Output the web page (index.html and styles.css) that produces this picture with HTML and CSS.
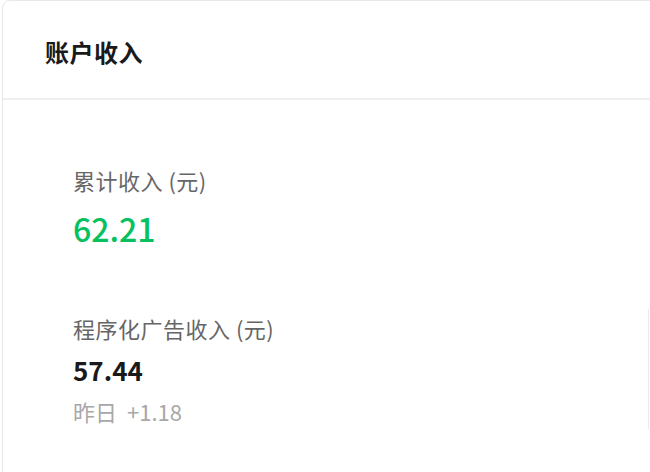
FILE: index.html
```html
<!DOCTYPE html>
<html lang="zh">
<head>
<meta charset="utf-8">
<link rel="stylesheet" href="styles.css">
</head>
<body>
<div class="card">
  <div class="card-header">
    <h2 class="title">账户收入</h2>
  </div>
  <div class="card-body">
    <div class="total">
      <div class="label">累计收入 (元)</div>
      <div class="total-value">62.21</div>
    </div>
    <div class="items">
      <div class="item">
        <div class="label">程序化广告收入 (元)</div>
        <div class="item-value">57.44</div>
        <div class="sub">昨日<span class="delta">+1.18</span></div>
      </div>
      <div class="item"></div>
    </div>
  </div>
</div>
</body>
</html>
```
FILE: styles.css
```css
html, body {
  margin: 0;
  padding: 0;
  overflow: hidden;
  background: #ffffff;
}
body {
  font-family: "Noto Sans CJK SC", "Noto Sans", sans-serif;
  padding: 0 0 0 2px;
  width: 650px;
  height: 472px;
  box-sizing: border-box;
}
.card {
  width: 720px;
  height: 520px;
  border: 1px solid #e8e8e8;
  border-radius: 8px;
  background: #fff;
  box-sizing: border-box;
}
.card-header {
  height: 99px;
  box-sizing: border-box;
  border-bottom: 2px solid #efefef;
  padding: 0 0 0 42px;
  display: flex;
  align-items: center;
}
.title {
  margin: 4px 0 0;
  font-size: 24px;
  font-weight: 700;
  color: #1a1a1a;
  line-height: 32px;
  letter-spacing: 0.5px;
}
.card-body {
  padding: 65px 0 0 70px;
}
.label {
  font-size: 22px;
  line-height: 30px;
  color: #666666;
  letter-spacing: 0.5px;
}
.total-value {
  margin-top: 13px;
  font-size: 32px;
  line-height: 40px;
  font-weight: 500;
  color: #07c160;
}
.items {
  display: flex;
  margin-top: 61px;
}
.item {
  flex: 0 0 576px;
  padding: 4px 0 3px;
  border-right: 1px solid #ececec;
  box-sizing: border-box;
}
.item + .item {
  border-right: none;
}
.item-value {
  margin-top: 10px;
  font-size: 26px;
  line-height: 34px;
  font-weight: 700;
  color: #1a1a1a;
}
.sub {
  margin-top: 9px;
  font-size: 22px;
  line-height: 30px;
  color: #a8a8a8;
}
.delta {
  margin-left: 10px;
}
```
